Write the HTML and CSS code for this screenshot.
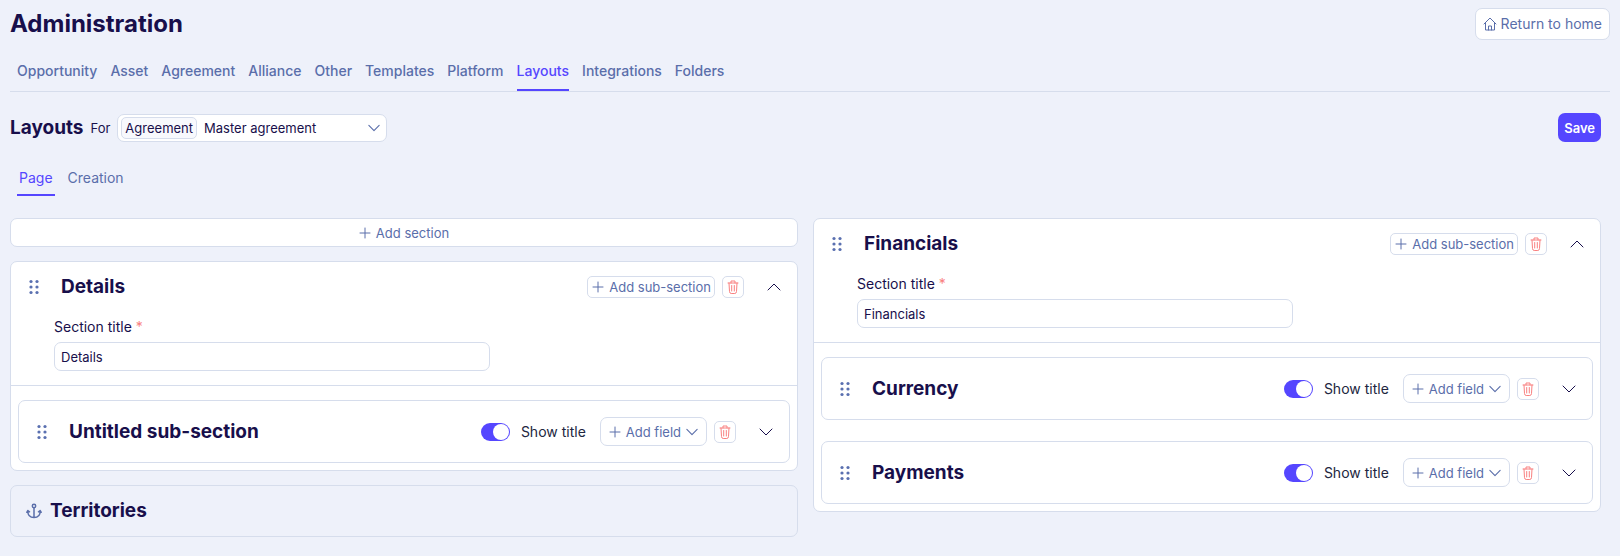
FILE: index.html
```html
<!DOCTYPE html>
<html lang="en">
<head>
    <meta charset="UTF-8">
    <meta name="viewport" content="width=device-width, initial-scale=1.0">
    <title>Administration - Layouts</title>
    <link rel="stylesheet" href="styles.css">
</head>
<body>

    <!-- Shared icons -->
    <svg class="sprite" aria-hidden="true">
        <symbol id="icon-home" viewBox="0 0 14 14"><path d="M1 7 7 1l6 6M2.500 5.800V13h9V5.800M5.500 13V9h3v4"/></symbol>
        <symbol id="icon-plus" viewBox="0 0 12 12"><path d="M6 1v10M1 6h10"/></symbol>
        <symbol id="icon-down" viewBox="0 0 14 14"><path d="M1 4l6 6 6-6"/></symbol>
        <symbol id="icon-up" viewBox="0 0 14 14"><path d="M1 10l6-6 6 6"/></symbol>
        <symbol id="icon-trash" viewBox="0 0 12 14"><path d="M1 3h10M4 3V1h4v2M2 3l.5 8.500q.2 2 1.700 2h3.600q1.500 0 1.700-2L10 3M4.700 5.500v5.500M7.300 5.500v5.500"/></symbol>
        <symbol id="icon-grip" viewBox="0 0 10 16"><circle cx="2" cy="2.500" r="1.600"/><circle cx="8" cy="2.500" r="1.600"/><circle cx="2" cy="8" r="1.600"/><circle cx="8" cy="8" r="1.600"/><circle cx="2" cy="13.500" r="1.600"/><circle cx="8" cy="13.500" r="1.600"/></symbol>
        <symbol id="icon-anchor" viewBox="0 0 16 16"><circle cx="8" cy="3" r="1.700"/><path d="M8 5v9.500M.8 9.300l1-1.800 1.700 1.300M15.200 9.300l-1-1.800-1.700 1.300M1.800 8c0 4 2.500 6.500 6.200 6.500s6.200-2.500 6.200-6.500"/></symbol>
    </svg>

    <header class="page-header">
        <h1>Administration</h1>
        <button class="btn btn-home" type="button"><svg class="icon"><use href="#icon-home"/></svg>Return to home</button>
    </header>

    <nav class="main-tabs">
        <a href="#">Opportunity</a>
        <a href="#">Asset</a>
        <a href="#">Agreement</a>
        <a href="#">Alliance</a>
        <a href="#">Other</a>
        <a href="#">Templates</a>
        <a href="#">Platform</a>
        <a href="#" class="active">Layouts</a>
        <a href="#">Integrations</a>
        <a href="#">Folders</a>
    </nav>

    <main>
        <div class="toolbar">
            <h2>Layouts</h2>
            <label for="layoutFor">For</label>
            <div class="layout-select">
                <span class="tag">Agreement</span>
                <select id="layoutFor">
                    <option>Master agreement</option>
                </select>
                <svg class="icon icon-caret"><use href="#icon-down"/></svg>
            </div>
            <button class="btn-save" type="button">Save</button>
        </div>

        <nav class="sub-tabs">
            <a href="#" class="active">Page</a>
            <a href="#">Creation</a>
        </nav>

        <div class="columns">
            <div class="column">
                <button class="btn btn-add-section" type="button"><svg class="icon icon-plus"><use href="#icon-plus"/></svg>Add section</button>

                <section class="card">
                    <div class="card-top">
                        <div class="card-header">
                            <svg class="grip"><use href="#icon-grip"/></svg>
                            <h2>Details</h2>
                            <button class="btn btn-small" type="button"><svg class="icon icon-plus"><use href="#icon-plus"/></svg>Add sub-section</button>
                            <button class="btn btn-trash" type="button" aria-label="Delete"><svg class="icon-trash"><use href="#icon-trash"/></svg></button>
                            <button class="toggle-card" type="button" aria-label="Collapse"><svg class="icon"><use href="#icon-up"/></svg></button>
                        </div>
                        <div class="field">
                            <label for="detailsTitle">Section title <span class="required">*</span></label>
                            <input type="text" id="detailsTitle" value="Details">
                        </div>
                    </div>
                    <div class="sub-sections">
                        <div class="sub-card">
                            <svg class="grip"><use href="#icon-grip"/></svg>
                            <h2>Untitled sub-section</h2>
                            <label class="switch"><input type="checkbox" checked>Show title</label>
                            <button class="btn btn-field" type="button"><svg class="icon icon-plus"><use href="#icon-plus"/></svg>Add field<svg class="icon icon-caret"><use href="#icon-down"/></svg></button>
                            <button class="btn btn-trash" type="button" aria-label="Delete"><svg class="icon-trash"><use href="#icon-trash"/></svg></button>
                            <button class="toggle-card" type="button" aria-label="Expand"><svg class="icon"><use href="#icon-down"/></svg></button>
                        </div>
                    </div>
                </section>

                <section class="card card-anchored">
                    <svg class="icon-anchor"><use href="#icon-anchor"/></svg>
                    <h2>Territories</h2>
                </section>
            </div>

            <div class="column">
                <section class="card">
                    <div class="card-top">
                        <div class="card-header">
                            <svg class="grip"><use href="#icon-grip"/></svg>
                            <h2>Financials</h2>
                            <button class="btn btn-small" type="button"><svg class="icon icon-plus"><use href="#icon-plus"/></svg>Add sub-section</button>
                            <button class="btn btn-trash" type="button" aria-label="Delete"><svg class="icon-trash"><use href="#icon-trash"/></svg></button>
                            <button class="toggle-card" type="button" aria-label="Collapse"><svg class="icon"><use href="#icon-up"/></svg></button>
                        </div>
                        <div class="field">
                            <label for="financialsTitle">Section title <span class="required">*</span></label>
                            <input type="text" id="financialsTitle" value="Financials">
                        </div>
                    </div>
                    <div class="sub-sections">
                        <div class="sub-card">
                            <svg class="grip"><use href="#icon-grip"/></svg>
                            <h2>Currency</h2>
                            <label class="switch"><input type="checkbox" checked>Show title</label>
                            <button class="btn btn-field" type="button"><svg class="icon icon-plus"><use href="#icon-plus"/></svg>Add field<svg class="icon icon-caret"><use href="#icon-down"/></svg></button>
                            <button class="btn btn-trash" type="button" aria-label="Delete"><svg class="icon-trash"><use href="#icon-trash"/></svg></button>
                            <button class="toggle-card" type="button" aria-label="Expand"><svg class="icon"><use href="#icon-down"/></svg></button>
                        </div>
                        <div class="sub-card">
                            <svg class="grip"><use href="#icon-grip"/></svg>
                            <h2>Payments</h2>
                            <label class="switch"><input type="checkbox" checked>Show title</label>
                            <button class="btn btn-field" type="button"><svg class="icon icon-plus"><use href="#icon-plus"/></svg>Add field<svg class="icon icon-caret"><use href="#icon-down"/></svg></button>
                            <button class="btn btn-trash" type="button" aria-label="Delete"><svg class="icon-trash"><use href="#icon-trash"/></svg></button>
                            <button class="toggle-card" type="button" aria-label="Expand"><svg class="icon"><use href="#icon-down"/></svg></button>
                        </div>
                    </div>
                </section>
            </div>
        </div>
    </main>

</body>
</html>
```

FILE: styles.css
```css
* {
    box-sizing: border-box;
}
body {
    margin: 0;
    padding: 8px 10px 16px;
    background-color: #eef1fa;
    color: #180f4b;
    font-family: Inter, "Liberation Sans", sans-serif;
    font-size: 13px;
    line-height: 20px;
}
h1, h2 {
    margin: 0;
    font-weight: 700;
}
h1 {
    font-size: 24px;
    line-height: 30px;
}
h2 {
    font-size: 19px;
    line-height: 24px;
}
a {
    color: #5a6eaa;
    text-decoration: none;
}
button, input, select {
    font: inherit;
    color: inherit;
}
button {
    cursor: pointer;
}

/* Icons */
.sprite {
    display: none;
}
.icon, .icon-trash, .icon-anchor {
    width: 14px;
    height: 14px;
    flex-shrink: 0;
    fill: none;
    stroke: currentColor;
    stroke-linecap: round;
    stroke-linejoin: round;
}
.icon-plus, .icon-caret {
    width: 12px;
    height: 12px;
}
.icon-caret {
    color: #5a6eaa;
    stroke-width: 1.3;
}
.icon-trash {
    width: 12px;
}
.icon-anchor {
    width: 16px;
    height: 16px;
    color: #5a6eaa;
    stroke-width: 1.5;
}
.grip {
    width: 10px;
    height: 16px;
    flex-shrink: 0;
    fill: #5a70b0;
}

/* Buttons */
.btn {
    display: flex;
    align-items: center;
    justify-content: center;
    gap: 5px;
    padding: 0 8px;
    background-color: #fff;
    color: #5a6eaa;
    border: 1px solid #d6ddec;
    border-radius: 7px;
    white-space: nowrap;
}
.btn-home {
    height: 32px;
    gap: 4px;
    padding: 0 7px;
    font-size: 14px;
}
.btn-add-section {
    height: 29px;
}
.btn-small {
    height: 22px;
    padding: 0 3px 0 4px;
    border-radius: 5px;
}
.btn-field {
    height: 29px;
}
.btn-trash {
    width: 22px;
    height: 22px;
    padding: 0;
    border-radius: 5px;
    color: #f98080;
}
.btn-save {
    height: 29px;
    margin-left: auto;
    padding: 0 6px;
    background-color: #5546ff;
    color: #fff;
    font-weight: 600;
    border: none;
    border-radius: 7px;
}
.toggle-card {
    display: flex;
    margin-left: 16px;
    padding: 0;
    background: none;
    border: none;
}

/* Header and tabs */
.page-header {
    display: flex;
    align-items: center;
    justify-content: space-between;
}
.main-tabs {
    display: flex;
    gap: 13px;
    margin-top: 21px;
    padding: 0 7px;
    font-size: 14px;
    font-weight: 500;
    border-bottom: 1px solid #d6ddec;
}
.main-tabs a {
    padding-bottom: 8px;
}
.active {
    color: #5546ff;
    border-bottom: 2px solid #5546ff;
}
main {
    padding-right: 9px;
}
.toolbar {
    display: flex;
    align-items: center;
    gap: 7px;
    margin-top: 21px;
}
.layout-select {
    display: flex;
    align-items: center;
    width: 270px;
    height: 28px;
    padding: 0 6px 0 3px;
    background-color: #fff;
    border: 1px solid #d6ddec;
    border-radius: 7px;
}
.tag {
    padding: 0 3px;
    background-color: #f8f9fd;
    border: 1px solid #d6ddec;
    border-radius: 5px;
}
.layout-select select {
    flex: 1;
    padding: 0 7px;
    appearance: none;
    background: none;
    border: none;
}
.sub-tabs {
    display: flex;
    gap: 11px;
    margin-top: 26px;
    padding: 0 7px;
    font-size: 14px;
}
.sub-tabs a {
    padding: 0 2px 6px;
}

/* Section cards */
.columns {
    display: grid;
    grid-template-columns: 1fr 1fr;
    align-items: start;
    gap: 15px;
    margin-top: 22px;
}
.column {
    display: flex;
    flex-direction: column;
    gap: 14px;
}
.card {
    background-color: #fff;
    border: 1px solid #d6ddec;
    border-radius: 7px;
}
.card-top {
    padding-bottom: 14px;
    border-bottom: 1px solid #d6ddec;
}
.card-header, .sub-card {
    display: flex;
    align-items: center;
    gap: 7px;
    padding: 0 16px 0 18px;
}
.card-header {
    padding-top: 13px;
}
.card-header h2, .sub-card h2 {
    flex: 1;
    margin-left: 15px;
}
.field {
    max-width: 479px;
    margin-top: 18px;
    padding-left: 43px;
}
.field label {
    display: block;
    margin-bottom: 5px;
    font-size: 14px;
}
.required {
    color: #f98080;
}
.field input {
    display: block;
    width: 100%;
    height: 29px;
    padding: 0 6px;
    background-color: #fff;
    border: 1px solid #d6ddec;
    border-radius: 7px;
}
.sub-sections {
    display: flex;
    flex-direction: column;
    gap: 21px;
    padding: 14px 7px 7px;
}
.sub-card {
    height: 63px;
    border: 1px solid #d6ddec;
    border-radius: 7px;
}
.switch {
    display: flex;
    align-items: center;
    gap: 11px;
    margin-right: 7px;
    color: #222640;
    font-size: 14px;
}
.switch input {
    width: 29px;
    height: 18px;
    margin: 0;
    padding: 1px;
    appearance: none;
    background-color: #5546ff;
    border-radius: 9px;
}
.switch input::before {
    content: "";
    display: block;
    width: 16px;
    height: 16px;
    background-color: #fff;
    border-radius: 50%;
}
.switch input:checked::before {
    margin-left: auto;
}
.card-anchored {
    display: flex;
    align-items: center;
    gap: 8px;
    height: 52px;
    padding: 0 15px;
    background: none;
}
```
